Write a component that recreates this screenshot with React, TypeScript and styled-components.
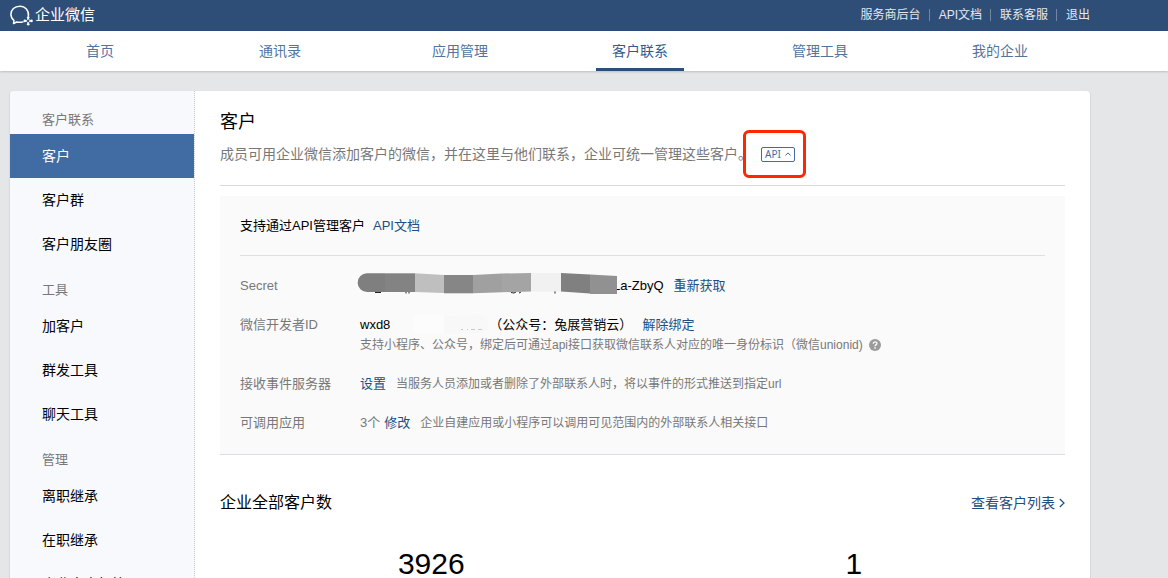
import React from "react";
import styled, { createGlobalStyle } from "styled-components";

const GlobalStyle = createGlobalStyle`
  * { box-sizing: border-box; }
  body {
    margin: 0;
    background: #e5e6e8;
    color: #000;
    font-family: "Liberation Sans", "Noto Sans CJK SC", sans-serif;
    font-size: 14px;
    line-height: 20px;
  }
  h1, h2, p, ul, dl, dd { margin: 0; padding: 0; }
  ul { list-style: none; }
  a { color: #1b4f84; text-decoration: none; }
`;

const Page = styled.div`
  height: 100vh;
  overflow: hidden;
`;

const Container = styled.div`
  max-width: 1080px;
  margin-left: 10px;
  display: flex;
`;

const TopBar = styled.header`
  background: #2e4e78;
`;

const TopBarInner = styled(Container)`
  height: 31px;
  padding-bottom: 2px;
  align-items: center;
  justify-content: space-between;
`;

const Brand = styled.a`
  display: flex;
  align-items: center;
  gap: 1px;
  color: #fff;
  font-size: 15px;
`;

const TopLinks = styled.nav`
  display: flex;
  align-items: center;
  font-size: 12px;
`;

const TopLink = styled.a`
  display: flex;
  align-items: center;
  color: #e3e8ef;

  & + &::before {
    content: "";
    width: 1px;
    height: 12px;
    margin: 0 9px 0 8px;
    background: #6f86a4;
  }
`;

const MainNav = styled.nav`
  background: #fff;
  box-shadow: 0 1px 2px rgba(0, 0, 0, 0.18);
`;

const NavItem = styled.a<{ $active?: boolean }>`
  flex: 1;
  display: flex;
  justify-content: center;
  height: 40px;
  color: ${(p) => (p.$active ? "#34598a" : "#52749f")};

  span {
    width: 88px;
    text-align: center;
    line-height: 40px;
    border-bottom: 3px solid ${(p) => (p.$active ? "#2e4e78" : "transparent")};
  }
`;

const Card = styled(Container)`
  margin-top: 20px;
  background: #fff;
  border-radius: 4px 4px 0 0;
  box-shadow: 0 1px 2px rgba(0, 0, 0, 0.2);
  overflow: hidden;
`;

const Sidebar = styled.aside`
  flex: 0 0 185px;
  padding: 5px 0 20px;
  background: #f8f9fd;
  border-right: 1px dotted #c6cad1;
`;

const SideTitle = styled.h2`
  padding: 14px 0 4px 32px;
  font-size: 13px;
  font-weight: 400;
  color: #787878;
`;

const SideItem = styled.a<{ $active?: boolean }>`
  display: block;
  padding-left: 32px;
  line-height: 44px;
  color: ${(p) => (p.$active ? "#fff" : "#000")};
  background: ${(p) => (p.$active ? "#416ca3" : "transparent")};
`;

const Content = styled.main`
  flex: 1;
  min-width: 0;
  padding: 19px 25px 40px;
`;

const PageHead = styled.section`
  padding-bottom: 21px;
  border-bottom: 1px solid #d9dadf;
`;

const Title = styled.h1`
  font-size: 18px;
  line-height: 24px;
  font-weight: 400;
`;

const Description = styled.div`
  display: flex;
  align-items: center;
  gap: 9px;
  margin-top: 10px;
  color: #787878;
`;

const ApiToggle = styled.button`
  position: relative;
  display: flex;
  align-items: center;
  justify-content: center;
  gap: 4px;
  width: 34px;
  height: 15px;
  padding: 0;
  border: 1px solid #416ca3;
  border-radius: 2px;
  background: #fff;
  color: #416ca3;
  font: 10px/13px "Noto Sans", sans-serif;
`;

const Highlight = styled.span`
  position: absolute;
  top: -18px;
  left: -19px;
  width: 63px;
  height: 48px;
  border: 3px solid #ff2600;
  border-radius: 6px;
  pointer-events: none;
`;

const Panel = styled.section`
  margin-top: 10px;
  padding: 0 20px 21px;
  background: #fafafa;
  border-bottom: 1px solid #dcdde0;
`;

const PanelHead = styled.div`
  display: flex;
  gap: 8px;
  font-size: 13px;
  line-height: 59px;
  border-bottom: 1px solid #dfe0e2;
`;

const Fields = styled.dl`
  display: flex;
  flex-direction: column;
  gap: 19px;
  padding-top: 20px;
  font-size: 13px;
`;

const Field = styled.div`
  display: flex;
`;

const Label = styled.dt`
  flex: 0 0 120px;
  color: #787878;
`;

const Line = styled.div<{ $gap?: number }>`
  display: flex;
  align-items: center;
  gap: ${(p) => p.$gap ?? 10}px;
`;

const Masked = styled.span`
  display: flex;

  svg {
    position: relative;
    margin: -3px -4px -3px -3px;
  }
`;

const Hint = styled.span`
  font-size: 12px;
  color: #787878;
`;

const Count = styled.span`
  color: #787878;
`;

const SectionHead = styled.div`
  display: flex;
  align-items: center;
  justify-content: space-between;
  margin-top: 36px;

  h2 {
    font-size: 16px;
    line-height: 24px;
    font-weight: 400;
  }

  a {
    display: flex;
    align-items: center;
    gap: 4px;
  }
`;

const Stats = styled.div`
  display: grid;
  grid-template-columns: 1fr 1fr;
  margin-top: 31px;
  font-size: 30px;
  line-height: 36px;
  text-align: center;
`;

const topLinks = ["服务商后台", "API文档", "联系客服", "退出"];
const navItems = ["首页", "通讯录", "应用管理", "客户联系", "管理工具", "我的企业"];
const sideGroups = [
  { title: "客户联系", items: ["客户", "客户群", "客户朋友圈"] },
  { title: "工具", items: ["加客户", "群发工具", "聊天工具"] },
  { title: "管理", items: ["离职继承", "在职继承", "企业客户标签"] },
];

const Logo = () => (
  <svg width="24" height="22" viewBox="0 0 24 22" fill="none" stroke="#fff" strokeWidth="1.5" aria-hidden="true">
    <path d="M18.400 12C19.200 6.200 15 2.200 9.800 2.200 4.600 2.200.9 5.800.9 10.300c0 2.600 1.200 4.800 3.100 6.200L3.500 19.500l3.200-1.500c2.100.5 4.300.5 6.300-.1" strokeLinejoin="round" strokeLinecap="round" />
    <path d="M18.200 14.200c.4 1.500 1.200 2.300 2.700 2.700-1.500.4-2.300 1.200-2.700 2.700-.4-1.500-1.200-2.300-2.700-2.700 1.500-.4 2.300-1.200 2.700-2.700Z" strokeWidth="1" />
    <g fill="#fff" stroke="none">
      <circle cx="18.200" cy="13.600" r="1.300" />
      <circle cx="21.500" cy="16.900" r="1.300" />
      <circle cx="18.200" cy="20.300" r="1.300" />
      <circle cx="14.800" cy="16.900" r="1.300" />
    </g>
  </svg>
);

const SecretMask = () => (
  <svg width="260" height="26" viewBox="0 0 260 26" aria-hidden="true">
    <path d="M18 19.500h6M49 17v3.500M52 17v3.500M154 19.500l3 .5 2-1M162 20l2-1M198 17v3.500" stroke="#222" fill="none" />
    <path d="M28 .3H10A9.300 9.300 0 0 0 10 19H28Z" fill="#7f7f7f" />
    <path d="M28 .3H58V19H28Z" fill="#838383" />
    <path d="M58 .3L87 2V20L58 19Z" fill="#bfbfbf" />
    <path d="M87 2H116V20.300H87Z" fill="#868686" />
    <path d="M116 2L145 .5V19.300L116 20.300Z" fill="#a0a0a0" />
    <path d="M145 .5L174 0V18.500L145 19.300Z" fill="#a4a4a4" />
    <path d="M174 0H204V18.500H174Z" fill="#f1f1f1" />
    <path d="M204 0L233 1.500V20.500L204 18.500Z" fill="#808080" />
    <path d="M233 1.500L260 3V21H233Z" fill="#919191" />
  </svg>
);

const IdMask = () => (
  <svg width="99" height="20" viewBox="0 0 99 20" aria-hidden="true">
    <path d="M24 0H54V18H24Z" fill="#fcfcfc" />
    <path d="M54 1L90 0Q98 2 98 9T92 18H54Z" fill="#f8f8f8" />
    <path d="M71 14.500h2M77 14.500h1M81 14.500h4M88 14.500h4" stroke="#c9c9c9" />
  </svg>
);

const HelpIcon = () => (
  <svg width="12" height="12" viewBox="0 0 12 12" fill="none" aria-hidden="true">
    <circle cx="6" cy="6" r="6" fill="#9b9b9b" />
    <path d="M4.200 4.800C4.200 2.200 7.900 2.200 7.900 4.600 7.900 5.900 6 5.900 6 7.300" stroke="#fff" strokeWidth="1.300" />
    <path d="M6 8.300V9.700" stroke="#fff" strokeWidth="1.400" />
  </svg>
);

export default function App() {
  return (
    <Page>
      <GlobalStyle />
      <TopBar>
        <TopBarInner>
          <Brand href="#">
            <Logo />
            企业微信
          </Brand>
          <TopLinks>
            {topLinks.map((t) => (
              <TopLink href="#" key={t}>{t}</TopLink>
            ))}
          </TopLinks>
        </TopBarInner>
      </TopBar>
      <MainNav>
        <Container>
          {navItems.map((t) => (
            <NavItem href="#" key={t} $active={t === "客户联系"}>
              <span>{t}</span>
            </NavItem>
          ))}
        </Container>
      </MainNav>
      <Card>
        <Sidebar>
          {sideGroups.map((g) => (
            <section key={g.title}>
              <SideTitle>{g.title}</SideTitle>
              <ul>
                {g.items.map((t) => (
                  <li key={t}>
                    <SideItem href="#" $active={t === "客户"}>{t}</SideItem>
                  </li>
                ))}
              </ul>
            </section>
          ))}
        </Sidebar>
        <Content>
          <PageHead>
            <Title>客户</Title>
            <Description>
              <p>成员可用企业微信添加客户的微信，并在这里与他们联系，企业可统一管理这些客户。</p>
              <ApiToggle type="button">
                API
                <svg width="6" height="4" viewBox="0 0 6 4" fill="none" stroke="currentColor" aria-hidden="true">
                  <path d="M.4 3.500L3 .9 5.600 3.500" />
                </svg>
                <Highlight />
              </ApiToggle>
            </Description>
          </PageHead>
          <Panel>
            <PanelHead>
              <span>支持通过API管理客户</span>
              <a href="#">API文档</a>
            </PanelHead>
            <Fields>
              <Field>
                <Label>Secret</Label>
                <dd>
                  <Line>
                    <Masked>
                      <SecretMask />
                      La-ZbyQ
                    </Masked>
                    <a href="#">重新获取</a>
                  </Line>
                </dd>
              </Field>
              <Field>
                <Label>微信开发者ID</Label>
                <dd>
                  <Line>
                    <Line $gap={0}>
                      wxd8
                      <IdMask />
                      （公众号：兔展营销云）
                    </Line>
                    <a href="#">解除绑定</a>
                  </Line>
                  <Line $gap={6}>
                    <Hint>支持小程序、公众号，绑定后可通过api接口获取微信联系人对应的唯一身份标识（微信unionid)</Hint>
                    <HelpIcon />
                  </Line>
                </dd>
              </Field>
              <Field>
                <Label>接收事件服务器</Label>
                <dd>
                  <Line>
                    <a href="#">设置</a>
                    <Hint>当服务人员添加或者删除了外部联系人时，将以事件的形式推送到指定url</Hint>
                  </Line>
                </dd>
              </Field>
              <Field>
                <Label>可调用应用</Label>
                <dd>
                  <Line>
                    <Line $gap={4}>
                      <Count>3个</Count>
                      <a href="#">修改</a>
                    </Line>
                    <Hint>企业自建应用或小程序可以调用可见范围内的外部联系人相关接口</Hint>
                  </Line>
                </dd>
              </Field>
            </Fields>
          </Panel>
          <SectionHead>
            <h2>企业全部客户数</h2>
            <a href="#">
              查看客户列表
              <svg width="6" height="10" viewBox="0 0 6 10" fill="none" stroke="currentColor" strokeWidth="1.200" aria-hidden="true">
                <path d="M.8 1L5 5 .8 9" />
              </svg>
            </a>
          </SectionHead>
          <Stats>
            <div>3926</div>
            <div>1</div>
          </Stats>
        </Content>
      </Card>
    </Page>
  );
}
